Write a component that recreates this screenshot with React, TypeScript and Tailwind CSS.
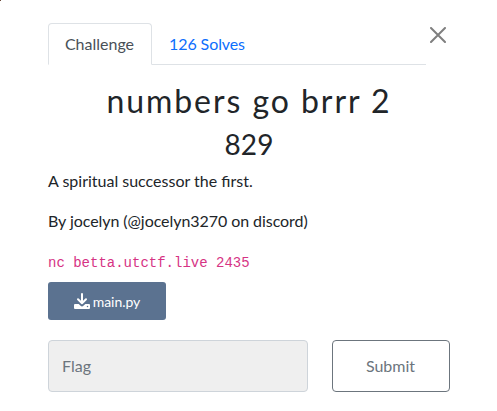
export default function App() {
  return (
    <div className="relative h-[411px] w-[497px] overflow-hidden bg-white pl-12 pr-[47px] pt-[23px] font-['Lato',sans-serif] text-base leading-6 text-[#212529]">
      <div className="absolute left-0 top-0 h-px w-px bg-[#6b4a3a]" />
      <div className="flex">
        <div className="flex h-[42px] w-[378px] border-b border-[#dee2e6]">
          <button className="h-[42px] w-[104px] shrink-0 rounded-t-[4px] border border-b-white border-[#dee2e6] bg-white pr-px text-[#495057]">Challenge</button>
          <button className="h-[42px] w-[110px] tracking-[-0.09px] text-[#0d6efd]">126 Solves</button>
        </div>
        <svg className="ml-[4px] mt-[4px] h-4 w-4" viewBox="0 0 16 16" fill="none" stroke="#7f7f7f" strokeWidth="2" strokeLinecap="round">
          <path d="M1 1 15 15M15 1 1 15" />
        </svg>
      </div>
      <h2 className="mt-[17px] text-center text-[32px] leading-[38px] tracking-[1.95px]">numbers go brrr 2</h2>
      <h3 className="mt-[7px] text-center text-[28px] leading-[34px] tracking-[0.1px]">829</h3>
      <p className="mt-2">A spiritual successor the first.</p>
      <p className="mt-4 tracking-[-0.06px]">By jocelyn (@jocelyn3270 on discord)</p>
      <p className="mt-[18px] font-['Liberation_Mono',monospace] text-sm leading-6 text-[#d63384]">nc betta.utctf.live 2435</p>
      <button className="mt-[7px] flex h-[38px] w-[118px] items-center justify-center gap-[3px] rounded-[3px] bg-[#5b7290] text-sm text-white">
        <svg className="h-4 w-4" viewBox="0 0 16 16" fill="none">
          <path d="M8 1v9M4 6.3 8 10.3 12 6.3" stroke="white" strokeWidth="2" strokeLinecap="round" strokeLinejoin="round" />
          <path d="M1 11h3.7l1.9 1.8a2 2 0 0 0 2.8 0l1.9-1.8H15a1 1 0 0 1 1 1v3a1 1 0 0 1-1 1H1a1 1 0 0 1-1-1v-3a1 1 0 0 1 1-1Z" fill="white" />
          <circle cx="13.5" cy="13.5" r=".75" fill="#5b7290" />
        </svg>
        <span className="mt-[2px] tracking-[-0.05px]">main.py</span>
      </button>
      <div className="mt-5 flex gap-6">
        <input placeholder="Flag" className="h-[52px] w-[260px] rounded-[4px] border border-[#ced4da] bg-[#efefef] px-[13px] pb-[2px] placeholder:text-[#6c757d]" />
        <button className="h-[52px] w-[118px] rounded-[4px] border border-[#6c757d] pr-px text-[#6c757d]">Submit</button>
      </div>
    </div>
  );
}
